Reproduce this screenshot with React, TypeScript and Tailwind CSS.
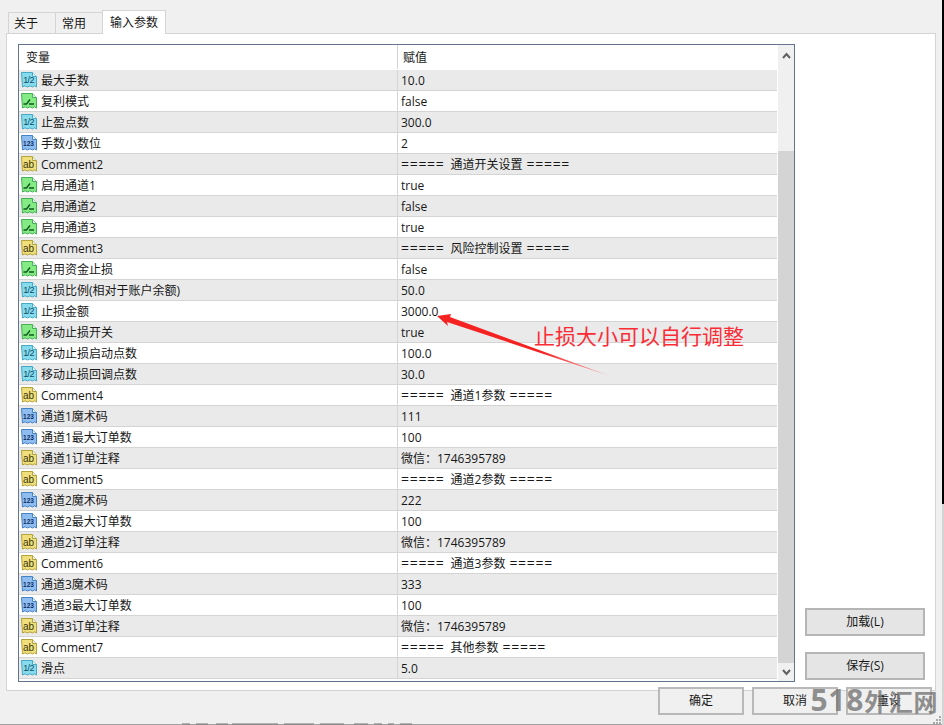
const font = { fontFamily: '"Open Sans", "Noto Sans CJK SC", sans-serif' }

type Kind = "half" | "bool" | "int" | "text"

const rows: [Kind, string, string][] = [
  ["half", "最大手数", "10.0"],
  ["bool", "复利模式", "false"],
  ["half", "止盈点数", "300.0"],
  ["int", "手数小数位", "2"],
  ["text", "Comment2", "===== 通道开关设置 ====="],
  ["bool", "启用通道1", "true"],
  ["bool", "启用通道2", "false"],
  ["bool", "启用通道3", "true"],
  ["text", "Comment3", "===== 风险控制设置 ====="],
  ["bool", "启用资金止损", "false"],
  ["half", "止损比例(相对于账户余额)", "50.0"],
  ["half", "止损金额", "3000.0"],
  ["bool", "移动止损开关", "true"],
  ["half", "移动止损启动点数", "100.0"],
  ["half", "移动止损回调点数", "30.0"],
  ["text", "Comment4", "===== 通道1参数 ====="],
  ["int", "通道1魔术码", "111"],
  ["int", "通道1最大订单数", "100"],
  ["text", "通道1订单注释", "微信：1746395789"],
  ["text", "Comment5", "===== 通道2参数 ====="],
  ["int", "通道2魔术码", "222"],
  ["int", "通道2最大订单数", "100"],
  ["text", "通道2订单注释", "微信：1746395789"],
  ["text", "Comment6", "===== 通道3参数 ====="],
  ["int", "通道3魔术码", "333"],
  ["int", "通道3最大订单数", "100"],
  ["text", "通道3订单注释", "微信：1746395789"],
  ["text", "Comment7", "===== 其他参数 ====="],
  ["half", "滑点", "5.0"],
]

const palette = {
  half: { fill: "#86dcec", edge: "#46a9c6", ink: "#0f4a66", label: "1/2" },
  bool: { fill: "#84ea84", edge: "#45b055", ink: "#0f5a1c", label: "" },
  int: { fill: "#8fbdf0", edge: "#4682c6", ink: "#0e2f66", label: "123" },
  text: { fill: "#f0e07c", edge: "#b5a238", ink: "#3a340c", label: "ab" },
}

function TypeIcon({ kind }: { kind: Kind }) {
  const c = palette[kind]
  return (
    <svg width="16" height="16" viewBox="0 0 16 16" className="shrink-0">
      <path
        d="M.5 .5h11l4 4v10.5l-2-1.2-2 1.2-2.5-1.2-2.5 1.2-2.5-1.2-2.5 1.2z"
        fill={c.fill}
        stroke={c.edge}
      />
      <path d="M11.5 .5v4h4" fill="#e8f4f4" stroke={c.edge} />
      {kind === "bool" ? (
        <path d="M2.5 11h3l3.5-4.5M8 11h5" fill="none" stroke={c.ink} strokeWidth="1.4" />
      ) : (
        <text
          x="7.5"
          y={kind === "text" ? 11.5 : 11}
          textAnchor="middle"
          fontSize={kind === "text" ? 10 : kind === "int" ? 6.5 : 9}
          fontWeight={kind === "int" ? 700 : 400}
          letterSpacing={kind === "half" ? -0.6 : 0}
          fill={c.ink}
          fontFamily="Liberation Sans, sans-serif"
        >
          {c.label}
        </text>
      )}
    </svg>
  )
}

function Chevron({ up }: { up?: boolean }) {
  return (
    <svg width="9" height="7" viewBox="0 0 9 7">
      <path
        d={up ? "M1 6l3.5-4 3.5 4" : "M1 1l3.5 4 3.5-4"}
        fill="none"
        stroke="#606060"
        strokeWidth="2"
      />
    </svg>
  )
}

function SideButton({ children }: { children: string }) {
  return (
    <button className="h-7 w-30 border-2 border-neutral-400/70 bg-neutral-200 text-xs text-neutral-900">
      {children}
    </button>
  )
}

function FootButton({ children }: { children: string }) {
  return (
    <button className="h-7 w-21.5 border-2 border-neutral-400/70 bg-[#f0f0f0] text-xs text-neutral-900">
      {children}
    </button>
  )
}

// the "=====" banners are wider in the original font than in Open Sans
function Value({ text }: { text: string }) {
  if (!text.startsWith("=")) return <>{text}</>
  const [left, middle, right] = text.split(" ")
  return (
    <>
      <span className="mr-1.5 text-sm leading-none tracking-wider">{left}</span>
      {middle}
      <span className="ml-1 text-sm leading-none tracking-wider">{right}</span>
    </>
  )
}

export default function App() {
  return (
    <div className="flex h-screen w-full overflow-hidden bg-white">
      <div
        className="relative flex flex-1 flex-col border-b border-neutral-400 bg-[#f0f0f0] pt-2.5 pr-1.5 pl-1.5 text-xs text-neutral-900"
        style={font}
      >
        {/* tabs */}
        <div className="relative z-10 -mb-px flex items-end pl-0.5">
          <div className="flex h-5.5 w-12 items-center border-x border-t border-neutral-300 pl-1.25">关于</div>
          <div className="-ml-px flex h-5.5 w-12 items-center border-x border-t border-neutral-300 pl-1.5">常用</div>
          <div className="-ml-px flex h-6 w-16 items-center justify-center border-x border-t border-neutral-300 bg-white">输入参数</div>
        </div>

        {/* panel */}
        <div className="flex gap-2.5 border border-neutral-300 bg-white pt-2.5 pr-2.5 pb-2 pl-2.75">
          <div className="flex flex-1 border border-slate-500">
            <div className="flex-1">
              <div className="flex h-6 leading-6">
                <div className="w-94.5 pl-1.75 pt-px">变量</div>
                <div className="border-l border-neutral-300 pl-1.25 pt-px">赋值</div>
              </div>
              {rows.map(([kind, name, value], i) => (
                <div
                  key={name}
                  className={`flex h-5.25 border-t leading-4.5 ${i === 0 ? "border-white" : "border-neutral-300"} ${i % 2 === 0 ? "bg-neutral-200/80" : "bg-white"}`}
                >
                  <div className="flex w-94.5 items-center gap-1 pl-0.5">
                    <TypeIcon kind={kind} />
                    <span className="pt-0.5">{name}</span>
                  </div>
                  <div className="border-l border-neutral-300 pt-0.5 pl-0.75">
                    <Value text={value} />
                  </div>
                </div>
              ))}
              <div className="h-0.75 border-t border-neutral-300" />
            </div>
            <div className="ml-px flex w-4 flex-col items-center bg-[#f0f0f0]">
              <div className="flex h-5 items-center justify-center">
                <Chevron up />
              </div>
              <div className="h-21.5" />
              <div className="w-full flex-1 bg-neutral-300" />
              <div className="flex h-4.5 items-center justify-center">
                <Chevron />
              </div>
            </div>
          </div>
          <div className="flex flex-col justify-end gap-4 pb-0.5">
            <SideButton>加载(L)</SideButton>
            <SideButton>保存(S)</SideButton>
          </div>
        </div>

        {/* bottom buttons */}
        <div className="relative -mt-1 flex justify-end gap-2 pr-1">
          <FootButton>确定</FootButton>
          <FootButton>取消</FootButton>
          <FootButton>重设</FootButton>
        </div>

        {/* annotation and window leftovers drawn on top of the screenshot */}
        <svg width="942" height="725" className="pointer-events-none absolute inset-0">
          <defs>
            <linearGradient id="tail" x1="437" y1="316" x2="610" y2="376" gradientUnits="userSpaceOnUse">
              <stop offset="0.6" stopColor="#f52222" />
              <stop offset="1" stopColor="#f8b0b0" />
            </linearGradient>
          </defs>
          <path d="M437 316L451 314L450 317L610 376L447 322L448 326Z" fill="url(#tail)" />
          <g fill="#a8a8a8">
            <rect x="939" y="716" width="2" height="2" />
            <rect x="936" y="719" width="2" height="2" />
            <rect x="939" y="719" width="2" height="2" />
            <rect x="933" y="722" width="2" height="2" />
            <rect x="936" y="722" width="2" height="2" />
            <rect x="939" y="722" width="2" height="2" />
          </g>
          <path
            d="M182 724h8M196 724h12M216 724h12M232 724h46M284 724h30M320 724h24M354 724h14M374 724h8M388 724h6M400 724h12"
            stroke="#777"
            strokeWidth="1"
          />
        </svg>
        <div className="absolute top-80.5 left-133.5 text-[21px] text-red-500">止损大小可以自行调整</div>
        <div className="absolute right-1 bottom-1.5 flex items-baseline font-bold text-neutral-500/80">
          <span className="text-3xl tracking-wide">518</span>
          <span className="text-2xl tracking-wide">外汇网</span>
        </div>
      </div>
      {/* sliver of the desktop behind the window */}
      <div className="flex w-0.5 flex-col">
        <div className="h-126 bg-black" />
        <div className="flex-1 bg-neutral-300" />
      </div>
    </div>
  )
}
